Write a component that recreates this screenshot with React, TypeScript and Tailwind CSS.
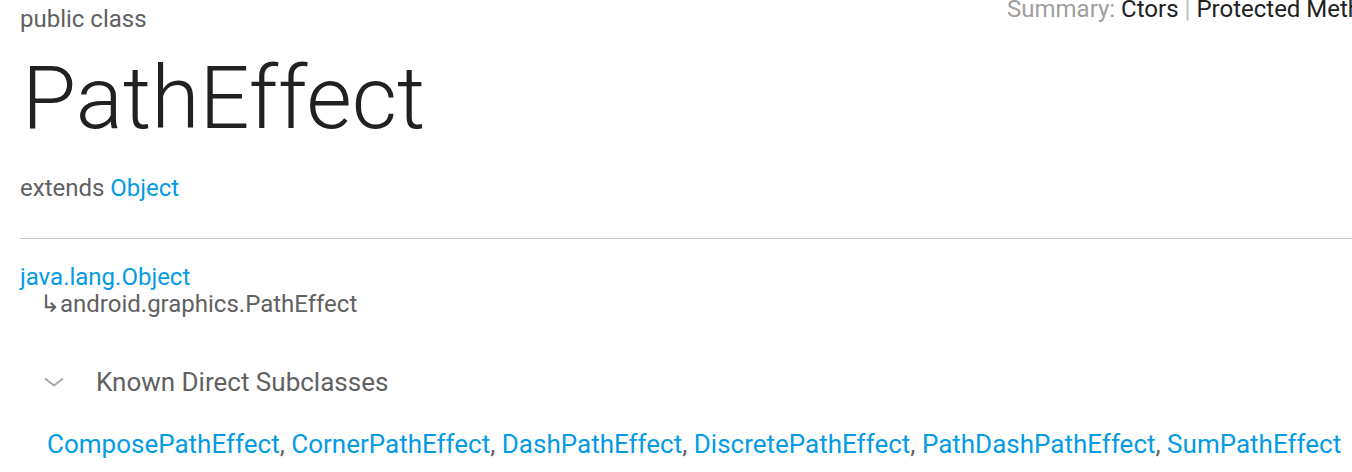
const subclasses = [
  "ComposePathEffect",
  "CornerPathEffect",
  "DashPathEffect",
  "DiscretePathEffect",
  "PathDashPathEffect",
  "SumPathEffect",
];

export default function App() {
  return (
    <div className="h-[472px] w-[1352px] overflow-hidden bg-white pl-5 font-['Roboto',sans-serif]">
      {/* top row: class kind + summary nav */}
      <div className="grid grid-cols-[987px_1fr]">
        <div className="pt-[3px] text-[24px] leading-[32px] text-[#616161]">public class</div>
        <div className="-mt-[5px] whitespace-nowrap text-[24px] leading-[28px]">
          <span className="text-[#9e9e9e]">Summary: </span>
          <span className="text-[#212121]">Ctors</span>
          <span className="mx-[6px] text-[#bdbdbd]">|</span>
          <span className="text-[#212121]">Protected Methods</span>
        </div>
      </div>

      <h1 className="mt-[19px] pl-[2px] text-[88px] font-light leading-[88px] text-[#212121]">PathEffect</h1>

      <p className="mt-[30px] text-[24px] leading-[32px] text-[#616161]">
        extends <a className="text-[#039be5]">Object</a>
      </p>

      <hr className="mt-[34px] border-t border-[#cccccc]" />

      <div className="mt-[25px] text-[24px] leading-[27px]">
        <a className="block text-[#039be5]">java.lang.Object</a>
        <div className="pl-[20px] text-[#616161]">↳android.graphics.PathEffect</div>
      </div>

      <div className="mt-[48px] flex items-center">
        <svg className="ml-[24px] h-[10px] w-[20px]" viewBox="0 0 20 10" fill="none">
          <path d="M1 1.5 L10 8.5 L19 1.5" stroke="#a8a8a8" strokeWidth="2" />
        </svg>
        <span className="ml-[32px] text-[26px] leading-[32px] text-[#616161]">Known Direct Subclasses</span>
      </div>

      <div className="mt-[30px] pl-[27px] text-[26px] leading-[32px] text-[#616161]">
        {subclasses.map((name, i) => (
          <span key={name}>
            <a className="text-[#039be5]">{name}</a>
            {i < subclasses.length - 1 ? ", " : ""}
          </span>
        ))}
      </div>
    </div>
  );
}
